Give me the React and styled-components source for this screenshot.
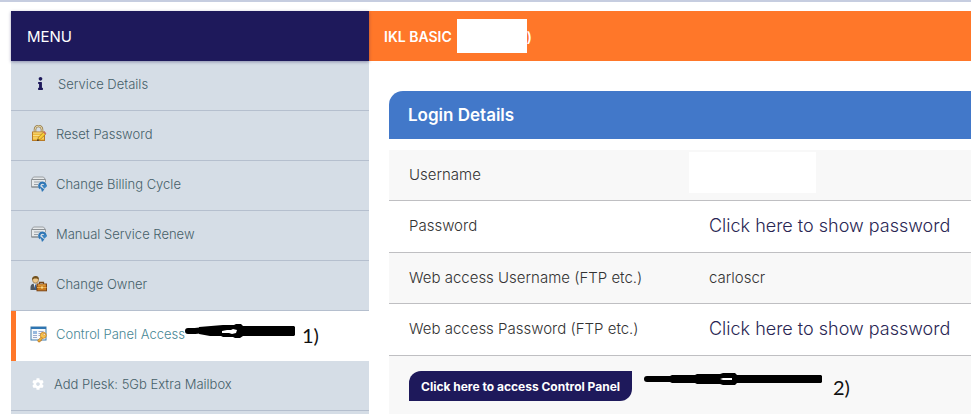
import React from 'react';
import styled, { createGlobalStyle } from 'styled-components';
import { FaCog, FaInfo } from 'react-icons/fa';

const GlobalStyle = createGlobalStyle`
  * {
    box-sizing: border-box;
  }

  body {
    margin: 0;
    background: #fff;
    font-family: Inter, 'Open Sans', sans-serif;
  }
`;

const LockIcon = () => (
  <svg width="17" height="17" viewBox="0 0 17 17" aria-hidden="true">
    <path d="M5 8V4.5a3.5 3.5 0 0 1 7 0V8" fill="none" stroke="#9b8458" strokeWidth="2.6" />
    <path d="M5 8V4.5a3.5 3.5 0 0 1 7 0V8" fill="none" stroke="#e8d9aa" strokeWidth="1" />
    <rect x="2.5" y="7" width="12" height="8.5" fill="#edb93b" stroke="#b87a25" />
    <path d="M3 8h11M3 10.5h11M3 13h11" stroke="#f9df87" />
    <path d="M7.5 15.5l1-3.3 5.2-5.2 2 2-5.2 5.2z" fill="#f7cf35" stroke="#a66a1c" strokeWidth=".7" />
    <path d="M13.2 7.5l1.2-1.2 2 2-1.2 1.2z" fill="#c86f65" />
    <path d="M7 16l.8-2 1.4 1.3z" fill="#222" />
  </svg>
);

const RenewIcon = () => (
  <svg width="17" height="17" viewBox="0 0 17 17" aria-hidden="true">
    <path d="M1.5 4.5L3.5 2h10l2 2.5V12h-14z" fill="#e6e9eb" stroke="#9a9fa3" />
    <path d="M1.5 4.5h14" stroke="#8b9094" />
    <path d="M4 7h8M4 9.5h4" stroke="#9ba1a5" />
    <path d="M1.5 12h7" stroke="#7d8387" />
    <circle cx="12.5" cy="10.5" r="4.2" fill="#d5dde6" />
    <path d="M10.5 13.4A3.2 3.2 0 1 1 15.6 10.6" fill="none" stroke="#2f76b5" strokeWidth="2.2" />
    <path d="M11.6 10h5.2v1.4l-2.6 2.4z" fill="#3c85c2" />
    <path d="M10.4 11.6l4 2.8-2.4 2.6z" fill="#2f76b5" />
  </svg>
);

const OwnerIcon = () => (
  <svg width="17" height="17" viewBox="0 0 17 17" aria-hidden="true">
    <path d="M.5 15v-3c0-2.5 2-3.5 4.5-3.5s4.5 1 4.5 3.5v3z" fill="#515861" />
    <path d="M3.5 8.5L5.3 14l1.9-5.5z" fill="#f3f3ef" />
    <path d="M5 9.5h1V14l-.5 1-.5-1z" fill="#3564a1" />
    <circle cx="5.5" cy="5" r="3" fill="#edc78b" stroke="#896128" strokeWidth=".6" />
    <path d="M2 5C1.8 2.4 3.3 1 5.7 1s3.5 1.5 3.1 4C8 3.8 6.8 3.4 5.5 3.5 3.8 3.4 3 4 2 5z" fill="#72511d" />
    <path d="M9.5 9V7.3h4V9" fill="none" stroke="#704519" strokeWidth="1.2" />
    <rect x="7" y="9" width="9.5" height="6.8" fill="#c9791c" stroke="#804715" />
    <path d="M8 10h7.5M7 12.5h9.5" stroke="#e8ad50" />
    <path d="M11 11.5h2v2h-2z" fill="#f7d987" />
  </svg>
);

const PanelIcon = () => (
  <svg width="17" height="17" viewBox="0 0 17 17" aria-hidden="true">
    <rect x="1" y="1" width="15" height="13" fill="#f6f9fb" stroke="#3f7aa9" />
    <path d="M1 2h15" stroke="#2e75b2" strokeWidth="2" />
    <rect x="3" y="5" width="4" height="3" fill="#96b9df" />
    <path d="M3 9.5h4M3 11.5h4M8.5 5.5h5M8.5 7.5h3M8.5 9.5h2" stroke="#9ba9cc" />
    <path d="M12 10.2l-4.2 4.2.5 1.5h1.8l.2-1.2 1.2-.1.1-1.1 1.4-1.4" fill="#edb33a" stroke="#b66d1c" strokeWidth=".7" />
    <circle cx="13.3" cy="9.3" r="3" fill="#f8c44d" stroke="#c58024" strokeWidth=".8" />
    <circle cx="14.2" cy="8.4" r="1" fill="#fff" stroke="#b66d1c" strokeWidth=".5" />
  </svg>
);

const menuItems = [
  { label: 'Service Details', icon: <FaInfo size={13} color="#1e195b" />, slot: 28, inset: 4 },
  { label: 'Reset Password', icon: <LockIcon /> },
  { label: 'Change Billing Cycle', icon: <RenewIcon /> },
  { label: 'Manual Service Renew', icon: <RenewIcon /> },
  { label: 'Change Owner', icon: <OwnerIcon /> },
  { label: 'Control Panel Access', icon: <PanelIcon />, active: true },
  { label: 'Add Plesk: 5Gb Extra Mailbox', icon: <FaCog size={12} color="#fff" />, slot: 24, inset: 2 },
];

const App = () => {
  return (
    <>
      <GlobalStyle />
      <Page>
        <Sidebar>
          <MenuTitle>MENU</MenuTitle>
          {menuItems.map((item) => (
            <MenuItem key={item.label} $active={item.active}>
              <MenuLink href="#" $active={item.active}>
                <IconSlot $width={item.slot} $inset={item.inset}>{item.icon}</IconSlot>
                {item.label}
              </MenuLink>
              {item.active && (
                <Note $left={169} $top={8} $line={32}>
                  <svg width="111" height="24" viewBox="0 0 111 24" aria-hidden="true">
                    <path
                      d="M3 12h8M10 12l9-1M19 11.5h18"
                      fill="none"
                      stroke="#000"
                      strokeWidth="6"
                      strokeLinecap="round"
                    />
                    <path d="M14 8l12-1 12-1h11l2-1h5l2 2h51l1 1v8l-1 1H58l-3 2h-5l-2-1H38l-2-1H25l-11-2z" />
                    <path d="M37 12l5-1h4l2-1 4 1-1 3-4 1-3-1h-7z" fill="#fff" />
                  </svg>
                  <span>1)</span>
                </Note>
              )}
            </MenuItem>
          ))}
        </Sidebar>
        <Content>
          <ProductBar>
            IKL BASIC <Redacted />)
          </ProductBar>
          <Details>
            <PanelTitle>Login Details</PanelTitle>
            <Table>
              <tbody>
                <Row>
                  <Label>Username</Label>
                  <HiddenCell><HiddenValue /></HiddenCell>
                </Row>
                <Row>
                  <Label>Password</Label>
                  <Value><PasswordLink href="#">Click here to show password</PasswordLink></Value>
                </Row>
                <Row>
                  <Label>Web access Username (FTP etc.)</Label>
                  <Value>carloscr</Value>
                </Row>
                <Row>
                  <Label>Web access Password (FTP etc.)</Label>
                  <Value><PasswordLink href="#">Click here to show password</PasswordLink></Value>
                </Row>
                <Row>
                  <ActionCell colSpan={2}>
                    <AccessButton type="button">Click here to access Control Panel</AccessButton>
                    <Note $left={254} $top={11} $line={40}>
                      <svg width="184" height="24" viewBox="0 0 184 24" aria-hidden="true">
                        <path d="M4 12h26" stroke="#000" strokeWidth="6" strokeLinecap="round" />
                        <path d="M27 9l2-1h23l2-1h23l3-1h12l2 2h84l1 1v6l-1 1H94l-2 2H80l-3-1H54l-2-1H29l-2-1z" />
                        <path d="M77 12l3-1h9v2h-9z" fill="#fff" />
                      </svg>
                      <span>2)</span>
                    </Note>
                  </ActionCell>
                </Row>
              </tbody>
            </Table>
          </Details>
        </Content>
      </Page>
    </>
  );
};

const Page = styled.div`
  display: grid;
  grid-template-columns: 358px 1fr;
  min-height: 100vh;
  padding: 9px 0 0 11px;
  border-top: 2px solid #c6cde0;
`;

const Sidebar = styled.nav`
  background: #d5dde6;
`;

const MenuTitle = styled.div`
  display: flex;
  align-items: center;
  position: relative;
  z-index: 1;
  height: 50px;
  padding: 0 16px;
  background: #1e195b;
  box-shadow: 0 1px 3px rgba(30, 25, 91, 0.4);
  color: #fff;
  font-size: 15px;
`;

const MenuItem = styled.div`
  position: relative;
  height: 50px;
  background: ${(p) => (p.$active ? '#fff' : '#d5dde6')};
  border-bottom: ${(p) => (p.$active ? 'none' : '1px solid #b5bfce')};
  border-left: ${(p) => (p.$active ? '5px solid #ff7729' : 'none')};
`;

const MenuLink = styled.a`
  display: flex;
  align-items: center;
  height: 100%;
  padding: 0 0 4px ${(p) => (p.$active ? '14px' : '19px')};
  color: ${(p) => (p.$active ? '#478795' : '#455f69')};
  font-size: 13px;
  font-weight: 300;
  text-decoration: none;
`;

const IconSlot = styled.span`
  display: flex;
  flex: none;
  width: ${(p) => p.$width || 26}px;
  padding-left: ${(p) => p.$inset || 0}px;
`;

// hand-drawn arrow with its step number
const Note = styled.div`
  display: flex;
  gap: 6px;
  position: absolute;
  top: ${(p) => p.$top}px;
  left: ${(p) => p.$left}px;
  color: #111;
  font-family: Lato, sans-serif;
  font-size: 20px;
  font-weight: 400;
  line-height: ${(p) => p.$line}px;
  pointer-events: none;
`;

const Content = styled.main`
  min-width: 0;
`;

const ProductBar = styled.header`
  display: flex;
  align-items: center;
  height: 50px;
  padding: 0 15px;
  background: #ff7729;
  color: #fff;
  font-size: 14px;
  font-weight: 600;
`;

const Redacted = styled.span`
  width: 70px;
  height: 34px;
  margin-left: 5px;
  background: #fff;
`;

const Details = styled.section`
  padding: 30px 0 0 20px;
`;

const PanelTitle = styled.h2`
  margin: 0 0 11px;
  padding: 0 19px;
  background: #4278c9;
  border-radius: 14px 0 0 0;
  color: #fff;
  font-size: 17px;
  font-weight: 600;
  line-height: 48px;
`;

const Table = styled.table`
  width: 100%;
  border-collapse: separate;
  border-spacing: 0;
  table-layout: fixed;
  color: #333;
  font-size: 15px;
  font-weight: 300;
`;

const Row = styled.tr`
  height: 51px;

  > * {
    border-bottom: 1px solid #bfbfc2;
  }

  &:nth-child(odd) {
    background: #f8f8f8;
  }

  &:nth-child(even) {
    height: 52px;
  }

  &:last-child {
    height: 58px;
  }

  &:last-child > * {
    border-bottom: none;
  }
`;

const Label = styled.th`
  width: 300px;
  padding: 0 20px 2px;
  font-weight: 300;
  text-align: left;
`;

const Value = styled.td`
  padding: 0 20px 2px;
`;

const HiddenCell = styled.td`
  padding: 2px 0 0;
  vertical-align: top;
`;

const HiddenValue = styled.div`
  width: 127px;
  height: 41px;
  background: #fff;
`;

const PasswordLink = styled.a`
  color: #292653;
  font-size: 18px;
  text-decoration: none;
`;

const ActionCell = styled.td`
  position: relative;
  padding: 2px 20px 0;
`;

const AccessButton = styled.button`
  display: block;
  height: 30px;
  padding: 0 12px;
  background: #1e195b;
  border: none;
  border-radius: 12px 0 12px 0;
  color: #fff;
  font-family: inherit;
  font-size: 12px;
  font-weight: 700;
`;

export default App;
